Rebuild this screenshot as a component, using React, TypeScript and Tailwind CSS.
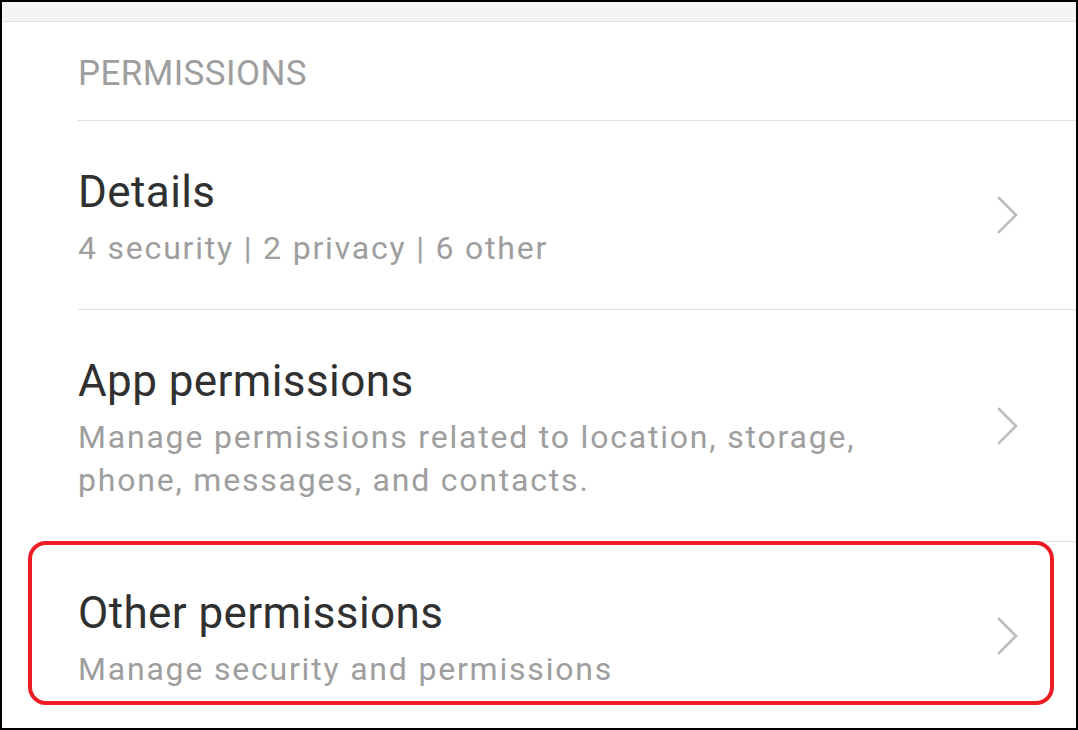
import React from 'react';

interface RowProps {
  title: string;
  subtitle: React.ReactNode;
}

function Chevron() {
  return (
    <svg width="22" height="40" viewBox="0 0 22 40" fill="none" className="shrink-0">
      <polyline
        points="3,3 20,20 3,37"
        stroke="#bdbdbd"
        strokeWidth="2.6"
        strokeLinecap="square"
        strokeLinejoin="miter"
      />
    </svg>
  );
}

function PermissionRow({ title, subtitle }: RowProps) {
  return (
    <div className="flex items-center border-t border-[#e0e0e0] pr-[58px]">
      <div className="flex-1 pt-[47px] pb-[39px]">
        <div className="text-[44px] leading-[48px] tracking-[0.4px] text-[#303030]">{title}</div>
        <div className="mt-[11px] text-[32px] leading-[43px] tracking-[1.8px] text-[#9e9e9e]">{subtitle}</div>
      </div>
      <Chevron />
    </div>
  );
}

export default function App() {
  return (
    <div
      className="relative w-[1078px] h-[730px] overflow-hidden border-2 border-black bg-white"
      style={{ fontFamily: 'Roboto, "Noto Sans", sans-serif' }}
    >
      <div className="h-[20px] bg-[#f5f5f5] border-b border-[#e2e2e2]" />

      <div className="pl-[76px]">
        <div className="pt-8 pb-[26px] text-[35px] leading-[40px] tracking-[0.4px] text-[#9e9e9e]">PERMISSIONS</div>

        <PermissionRow title="Details" subtitle="4 security | 2 privacy | 6 other" />
        <PermissionRow
          title="App permissions"
          subtitle={
            <>
              Manage permissions related to location, storage,
              <br />
              phone, messages, and contacts.
            </>
          }
        />
        <PermissionRow title="Other permissions" subtitle="Manage security and permissions" />
      </div>

      {/* red highlight annotation */}
      <div className="absolute left-[26px] top-[539px] w-[1026px] h-[164px] rounded-[18px] border-[4px] border-[#ed1c24] pointer-events-none" />
    </div>
  );
}
